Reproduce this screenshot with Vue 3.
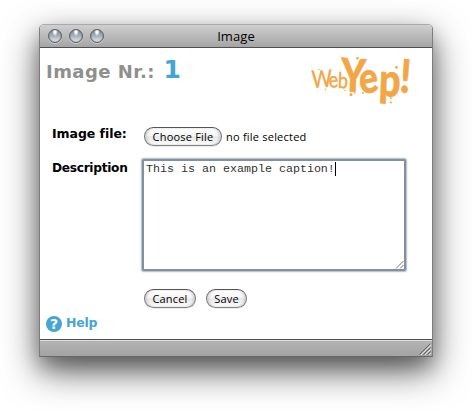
<script setup>
import { ref } from 'vue'

const caption = ref('This is an example caption!')
const lights = ['close', 'minimize', 'zoom']
</script>

<template>
  <main class="desktop">
    <section class="window">
      <header class="titlebar">
        <div class="lights">
          <i v-for="l in lights" :key="l" class="light"></i>
        </div>
        <span class="title">Image</span>
      </header>

      <div class="content">
        <div class="top">
          <h1 class="heading"><span class="label">Image Nr.:</span><span class="number">1</span></h1>
          <svg class="logo" viewBox="0 0 104 54" width="104" height="54">
            <g fill="#f2a646" stroke="#f2a646" stroke-linejoin="round" font-family="Lato, sans-serif">
              <text transform="scale(.82 1)" font-size="24" stroke-width=".4" x="0 21 31.500" y="32 32 32" rotate="-3 -6 2">W<tspan font-size="22">e</tspan><tspan font-size="22">b</tspan></text>
              <text transform="scale(.82 1)" font-weight="900" font-size="46" stroke-width=".6" x="34.500 59.500 81 106" y="35 38.500 39.500 36" rotate="3 -9 3 5">Y<tspan font-size="43">e</tspan><tspan font-size="46">p</tspan><tspan font-size="46">!</tspan></text>
              <g stroke="none">
                <circle cx="45.500" cy="2.200" r="1.300" />
                <circle cx="48" cy="5.200" r=".9" />
                <circle cx="39" cy="38.500" r="1.500" />
                <circle cx="51" cy="37" r=".9" />
                <circle cx="42.500" cy="37" r=".8" />
                <circle cx="84.500" cy="11.300" r="1.400" />
                <circle cx="78.800" cy="42" r="1" />
                <circle cx="78.800" cy="46.500" r="1.100" />
                <circle cx="13.500" cy="33.500" r=".7" />
                <circle cx="33" cy="34.500" r=".7" />
                <circle cx="7" cy="13.500" r=".7" />
              </g>
            </g>
          </svg>
        </div>

        <form class="form" @submit.prevent>
          <div class="row file">
            <label class="field">Image file:</label>
            <button type="button" class="aqua choose">Choose File</button>
            <span class="status">no file selected</span>
          </div>
          <div class="row desc">
            <label class="field">Description</label>
            <div class="textarea">
              <span class="caption">{{ caption }}</span><i class="caret"></i>
              <svg class="resize" width="9" height="9" viewBox="0 0 9 9">
                <path d="M1 8.500L8.500 1M5 8.500L8.500 5" stroke="#666" fill="none" stroke-width=".9" />
              </svg>
            </div>
          </div>
          <div class="actions">
            <button type="button" class="aqua cancel">Cancel</button>
            <button type="submit" class="aqua save">Save</button>
          </div>
        </form>

        <a class="help">
          <span class="help-icon">?</span>
          <span class="help-text">Help</span>
        </a>
      </div>

      <footer class="statusbar">
        <svg width="12" height="12" viewBox="0 0 12 12">
          <path d="M1.500 12.500L12.500 1.500M5.500 12.500L12.500 5.500M9.500 12.500L12.500 9.500" stroke="#ddd" fill="none" />
          <path d="M.5 11.500L11.500 .5M4.500 11.500L11.500 4.500M8.500 11.500L11.500 8.500" stroke="#666" fill="none" />
        </svg>
      </footer>
    </section>
  </main>
</template>

<style>
body {
  margin: 0;
  background: #fff;
  overflow: hidden;
}
</style>

<style scoped>
.desktop {
  box-sizing: border-box;
  width: 472px;
  height: 411px;
  padding: 24px 39px 0;
  overflow: hidden;
  background: #fff;
}
.window {
  box-sizing: border-box;
  width: 394px;
  height: 333px;
  display: flex;
  flex-direction: column;
  border: 1px solid #7d7d7d;
  border-top-color: #aaa;
  border-bottom-color: #686868;
  border-radius: 5px 5px 0 0;
  box-shadow: 0 14px 36px rgba(0, 0, 0, 0.62), 0 10px 18px rgba(0, 0, 0, 0.22);
}
.titlebar {
  box-sizing: border-box;
  flex: none;
  height: 23px;
  display: grid;
  grid-template-columns: 1fr auto 1fr;
  align-items: center;
  border-bottom: 1px solid #505050;
  border-radius: 4px 4px 0 0;
  background: linear-gradient(#cfcfcf, #a5a5a5);
}
.lights {
  display: flex;
  gap: 7px;
  padding-left: 8px;
}
.light {
  box-sizing: border-box;
  width: 14px;
  height: 14px;
  border: 1px solid #59616c;
  border-radius: 50%;
  background: radial-gradient(ellipse at 50% 12%, #fff 0 12%, transparent 32%),
    linear-gradient(#858d97, #a5acb5 45%, #e2e6ea);
  box-shadow: inset 0 0 1px #59616c, 0 1px 0 rgba(255, 255, 255, 0.4);
}
.title {
  font: 13px/20px "Open Sans", sans-serif;
  letter-spacing: 0.1px;
  color: #000;
}
.content {
  flex: 1;
  display: flex;
  flex-direction: column;
  background: #fff;
}
.top {
  display: flex;
  justify-content: space-between;
  height: 71px;
  padding: 0 16px 0 6px;
}
.heading {
  display: flex;
  align-items: baseline;
  margin: 7px 0 0;
  height: 30px;
  font: bold 18px/30px "DejaVu Sans", sans-serif;
  color: #8f8f8c;
}
.label {
  font-size: 18px;
  letter-spacing: 0.45px;
}
.number {
  margin-left: 8.500px;
  font-size: 25px;
  color: #45a5d6;
}
.logo {
  margin-top: 8px;
  overflow: visible;
}
.row {
  display: flex;
}
.field {
  width: 92px;
  padding-left: 12px;
  box-sizing: border-box;
  font: bold 12.500px/18px "DejaVu Sans", sans-serif;
  letter-spacing: -0.05px;
  white-space: nowrap;
  color: #000;
}
.file {
  height: 40px;
  padding-top: 6px;
  box-sizing: border-box;
}
.aqua {
  box-sizing: border-box;
  height: 19px;
  padding: 0;
  border: 1px solid #777;
  border-color: #555 #777 #858585;
  border-radius: 10px;
  background: linear-gradient(#fff, #f5f5f5 45%, #e7e7e7 52%, #fdfdfd);
  box-shadow: inset 2px 0 2px rgba(0, 0, 0, 0.12), inset -2px 0 2px rgba(0, 0, 0, 0.12),
    0 1px 0 rgba(0, 0, 0, 0.08);
  font: 11px/16px "Open Sans", sans-serif;
  letter-spacing: 0.2px;
  color: #000;
  white-space: nowrap;
}
.choose {
  width: 78px;
  margin: 2px 0 0 12px;
}
.status {
  margin: 3px 0 0 4px;
  font: 11px/17px "Open Sans", sans-serif;
  letter-spacing: 0.22px;
  color: #000;
}
.desc .field {
  width: 102px;
  font-size: 12.200px;
  letter-spacing: -0.3px;
}
.textarea {
  position: relative;
  box-sizing: border-box;
  width: 264px;
  height: 112px;
  display: flex;
  align-items: flex-start;
  padding: 1px 0 0 2px;
  border: 2px solid #84909c;
  border-radius: 2px;
  box-shadow: 0 0 0 1px #b9c5cf, 0 0 2px 1px #c4d0da;
  background: #fff;
}
.caption {
  font: 11.670px/14px "Liberation Mono", monospace;
  color: #333;
  white-space: nowrap;
}
.caret {
  width: 1px;
  height: 14px;
  background: #000;
}
.resize {
  position: absolute;
  right: 0;
  bottom: 0;
}
.actions {
  display: flex;
  gap: 10px;
  padding: 18px 0 0 104px;
}
.cancel {
  width: 52px;
}
.save {
  width: 41px;
}
.help {
  display: flex;
  align-items: center;
  gap: 4px;
  padding: 8px 0 0 6px;
  font: bold 12.500px/16px "DejaVu Sans", sans-serif;
  letter-spacing: -0.2px;
  color: #45a5d6;
}
.help-icon {
  width: 16px;
  height: 16px;
  border-radius: 50%;
  background: #45a5d6;
  color: #fff;
  font-size: 14px;
  letter-spacing: 0;
  text-align: center;
}
.help-text {
  margin-top: -2px;
}
.statusbar {
  box-sizing: border-box;
  flex: none;
  height: 17px;
  display: flex;
  align-items: flex-end;
  justify-content: flex-end;
  padding: 0 1px 1px 0;
  border-top: 1px solid #505050;
  background: linear-gradient(#dedede 0 1px, #b4b4b4 1px, #a3a3a3);
}
</style>
